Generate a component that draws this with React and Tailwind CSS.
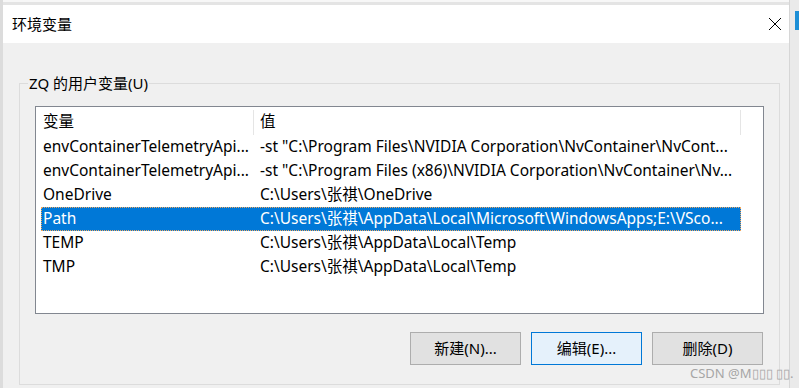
import React from "react";

const rows = [
  { name: "envContainerTelemetryApi...", value: '-st "C:\\Program Files\\NVIDIA Corporation\\NvContainer\\NvCont...' },
  { name: "envContainerTelemetryApi...", value: '-st "C:\\Program Files (x86)\\NVIDIA Corporation\\NvContainer\\Nv...' },
  { name: "OneDrive", value: "C:\\Users\\张祺\\OneDrive" },
  { name: "Path", value: "C:\\Users\\张祺\\AppData\\Local\\Microsoft\\WindowsApps;E:\\VSco...", selected: true },
  { name: "TEMP", value: "C:\\Users\\张祺\\AppData\\Local\\Temp" },
  { name: "TMP", value: "C:\\Users\\张祺\\AppData\\Local\\Temp" },
];

function Button({ children, primary }) {
  return (
    <button
      className={
        "flex h-[33px] w-[111px] items-center justify-center border text-[15px] text-black " +
        (primary ? "border-[#0078d7] bg-[#e5f1fb]" : "border-[#adadad] bg-[#e1e1e1]")
      }
    >
      {children}
    </button>
  );
}

export default function App() {
  return (
    <div className="relative flex h-[388px] w-[799px] overflow-hidden bg-[#ececec] font-['Noto_Sans','Noto_Sans_CJK_SC',sans-serif] text-black">
      {/* left edge of the window behind */}
      <div className="w-[3px] shrink-0 bg-[#dcdcdc]" />

      <div className="flex w-[786px] shrink-0 flex-col">
        <div className="h-[5px] border-t-2 border-[#f7f7f7] bg-[#e4e4e4]" />

        {/* title bar */}
        <div className="flex h-[38px] items-center justify-between bg-white pl-[9px] pr-[8px]">
          <span className="text-[15px] leading-none">环境变量</span>
          <svg width="14" height="14" viewBox="0 0 14 14" className="mr-[-1px]">
            <path d="M1 1 L13 13 M13 1 L1 13" stroke="#000" strokeWidth="1" fill="none" />
          </svg>
        </div>

        {/* body */}
        <div className="flex-1 bg-[#f0f0f0] pl-[16px] pt-[30px]">
          <fieldset className="h-[312px] w-[761px] border border-[#dcdcdc]">
            <legend className="ml-[8px] px-[1px] text-[15px] leading-[20px]">ZQ 的用户变量(U)</legend>

            <div className="ml-[15px] mt-[13px] h-[208px] w-[729px] border border-[#828790] bg-white text-[15.5px]">
              <div className="flex h-[28px] items-center pl-[5px] pt-[2px]">
                <div className="w-[212px] pl-[2px]">变量</div>
                <div className="h-[25px] w-px bg-[#e5e5e5]" />
                <div className="w-[486px] pl-[6px]">值</div>
                <div className="h-[25px] w-px bg-[#e5e5e5]" />
              </div>

              <div className="pl-[5px]">
                {rows.map((r, i) => (
                  <div
                    key={i}
                    className={
                      "flex h-[24px] w-[700px] items-center whitespace-nowrap " +
                      (r.selected
                        ? "bg-[#0078d7] text-white outline-1 -outline-offset-1 outline-dotted outline-[#f0a860]"
                        : "")
                    }
                  >
                    <div className="w-[213px] overflow-hidden pl-[2px]">{r.name}</div>
                    <div className="w-[487px] overflow-hidden pl-[6px]">{r.value}</div>
                  </div>
                ))}
              </div>
            </div>

            <div className="ml-[15px] mt-[18px] flex w-[728px] justify-end gap-[10px]">
              <Button>新建(N)...</Button>
              <Button primary>编辑(E)...</Button>
              <Button>删除(D)</Button>
            </div>
          </fieldset>
        </div>
      </div>

      {/* right edge, window behind */}
      <div className="flex w-[10px] shrink-0 flex-col border-l border-[#d6d6d6] bg-[#eaeaea] pt-[11px]">
        <div className="ml-[5px] h-[19px] bg-[#1d8fd6]" />
      </div>

      <span className="absolute left-[690px] top-[364px] text-[13px] leading-[18px] text-[#a6a6a6]">
        CSDN @M▯▯▯ ▯▯.
      </span>
    </div>
  );
}
